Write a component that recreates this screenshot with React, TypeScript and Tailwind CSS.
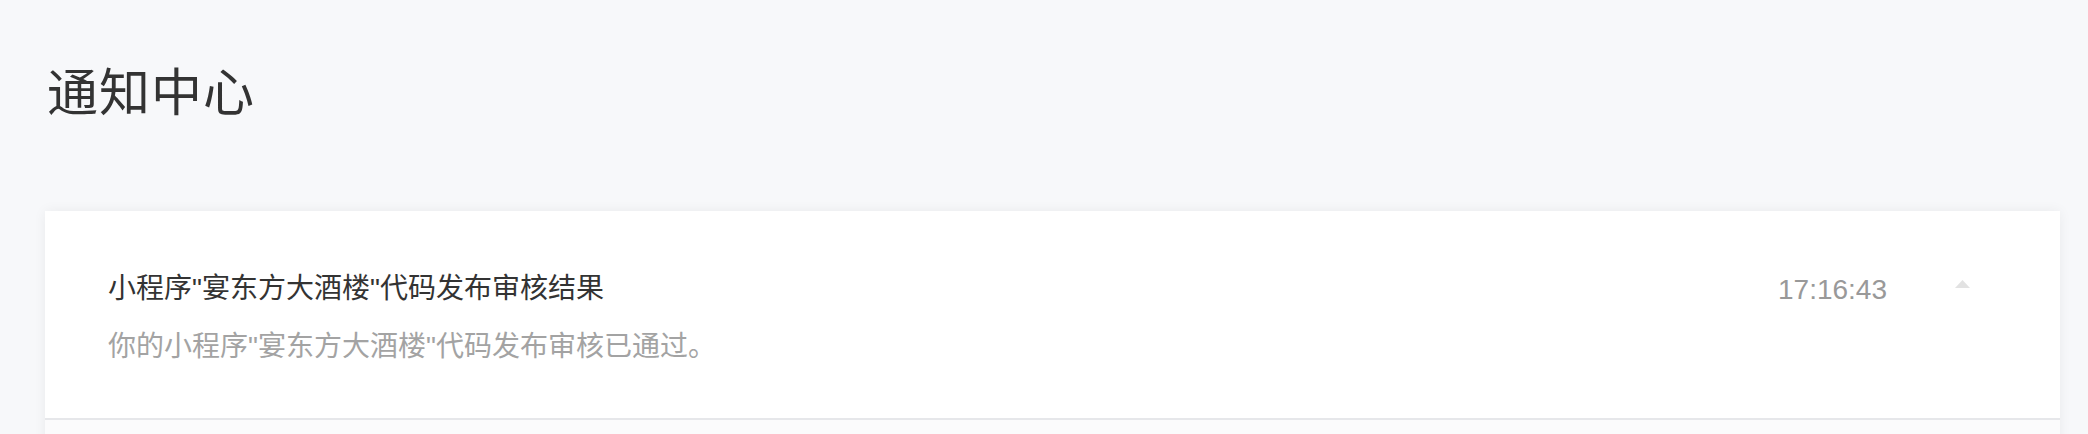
import React from "react";

const font = {
  fontFamily: '"Liberation Sans", "Noto Sans CJK SC", sans-serif',
};

export const NoticeItem = ({ title, desc, time }: any) => {
  return (
    <div className="flex items-start bg-white border-b-2 border-[#e6e7ea] pl-[63px] pr-[89px] pt-[64px] pb-[57px]">
      <div className="flex-1">
        <h2 className="text-[28px] leading-none text-[#333]">{title}</h2>
        <p className="mt-[30px] text-[28px] leading-none text-[#a3a3a3]">{desc}</p>
      </div>
      <p className="text-[28px] leading-none text-[#999] pt-[1px]">{time}</p>
      <div className="ml-[67px] pt-[4px]">
        <svg width="17" height="10" viewBox="0 0 17 10">
          <polygon points="8.5,1 16,9 1,9" fill="#e2e2e2" />
        </svg>
      </div>
    </div>
  );
};

export default function App() {
  return (
    <div className="min-h-[434px] bg-[#f7f8fa] pl-[45px] pr-[28px]" style={font}>
      <h1 className="pt-[68px] text-[51px] leading-none text-[#333] tracking-[1px] ml-[2px]">
        通知中心
      </h1>
      <div className="mt-[92px] shadow-[0_0_12px_rgba(0,0,0,0.06)]">
        <NoticeItem
          title={'小程序"宴东方大酒楼"代码发布审核结果'}
          desc={'你的小程序"宴东方大酒楼"代码发布审核已通过。'}
          time="17:16:43"
        />
        <div className="h-[40px] bg-[#fbfbfc]" />
      </div>
    </div>
  );
}
